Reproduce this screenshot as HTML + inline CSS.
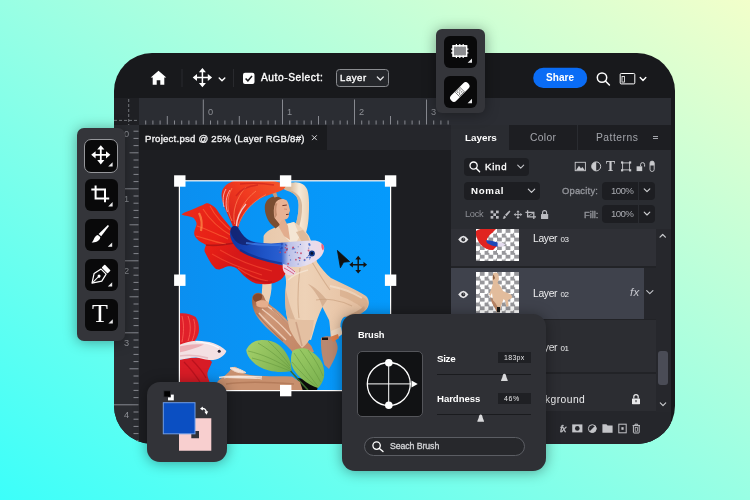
<!DOCTYPE html><html><head><meta charset="utf-8"><title>Editor</title><style>
*{box-sizing:border-box;margin:0;padding:0}
html,body{width:750px;height:500px;overflow:hidden}
body{position:relative;font-family:"Liberation Sans","DejaVu Sans",sans-serif;color:#fff;
 background:linear-gradient(to top right,#3cfffa 0%,#98ffe4 50%,#f2ffca 100%);}
.abs{position:absolute}
#win{position:absolute;left:114px;top:52.6px;width:560.5px;height:391.9px;border-radius:38px;background:#18191c;overflow:hidden}
#pg{position:absolute;left:-114px;top:-52.6px;width:750px;height:500px}
.t{position:absolute;white-space:nowrap;line-height:1;will-change:transform}
.float{position:absolute;background:#34353a;box-shadow:0 1px 14px rgba(0,0,0,.38)}
.btn{position:absolute;background:#09090a;border-radius:6px}
svg{position:absolute;left:0;top:0;overflow:visible}
</style></head><body>
<div id="win"><div id="pg">
<div class="abs" style="left:114px;top:98px;width:557px;height:27px;background:#2b2d33;"></div>
<div class="abs" style="left:114px;top:98px;width:25px;height:27px;background:#1f2024;"></div>
<div class="abs" style="left:114px;top:125px;width:25px;height:320px;background:#2b2d32;"></div>
<div class="abs" style="left:139px;top:125px;width:312px;height:25px;background:#25262b;"></div>
<div class="abs" style="left:139px;top:150px;width:312px;height:295px;background:#1d1e22;"></div>
<div class="abs" style="left:139px;top:125px;width:188px;height:25px;background:#1a1b1e;"></div>
<div class="abs" style="left:451px;top:125px;width:220px;height:320px;background:#2a2c31;"></div>
<svg width="750" height="500" viewBox="0 0 750 500"><rect x="145.20" y="120.5" width="1" height="4.0" fill="#878990"/><rect x="152.40" y="120.5" width="1" height="4.0" fill="#878990"/><rect x="159.60" y="120.5" width="1" height="4.0" fill="#878990"/><rect x="166.80" y="116" width="1" height="8.5" fill="#878990"/><rect x="174.00" y="120.5" width="1" height="4.0" fill="#878990"/><rect x="181.20" y="120.5" width="1" height="4.0" fill="#878990"/><rect x="188.40" y="120.5" width="1" height="4.0" fill="#878990"/><rect x="195.60" y="120.5" width="1" height="4.0" fill="#878990"/><rect x="202.80" y="99.5" width="1" height="25.0" fill="#878990"/><rect x="210.00" y="120.5" width="1" height="4.0" fill="#878990"/><rect x="217.20" y="120.5" width="1" height="4.0" fill="#878990"/><rect x="224.40" y="120.5" width="1" height="4.0" fill="#878990"/><rect x="231.60" y="120.5" width="1" height="4.0" fill="#878990"/><rect x="238.80" y="116" width="1" height="8.5" fill="#878990"/><rect x="246.00" y="120.5" width="1" height="4.0" fill="#878990"/><rect x="253.20" y="120.5" width="1" height="4.0" fill="#878990"/><rect x="260.40" y="120.5" width="1" height="4.0" fill="#878990"/><rect x="267.60" y="120.5" width="1" height="4.0" fill="#878990"/><rect x="274.80" y="120.5" width="1" height="4.0" fill="#878990"/><rect x="282.00" y="99.5" width="1" height="25.0" fill="#878990"/><rect x="289.20" y="120.5" width="1" height="4.0" fill="#878990"/><rect x="296.40" y="120.5" width="1" height="4.0" fill="#878990"/><rect x="303.60" y="120.5" width="1" height="4.0" fill="#878990"/><rect x="310.80" y="120.5" width="1" height="4.0" fill="#878990"/><rect x="318.00" y="116" width="1" height="8.5" fill="#878990"/><rect x="325.20" y="120.5" width="1" height="4.0" fill="#878990"/><rect x="332.40" y="120.5" width="1" height="4.0" fill="#878990"/><rect x="339.60" y="120.5" width="1" height="4.0" fill="#878990"/><rect x="346.80" y="120.5" width="1" height="4.0" fill="#878990"/><rect x="354.00" y="99.5" width="1" height="25.0" fill="#878990"/><rect x="361.20" y="120.5" width="1" height="4.0" fill="#878990"/><rect x="368.40" y="120.5" width="1" height="4.0" fill="#878990"/><rect x="375.60" y="120.5" width="1" height="4.0" fill="#878990"/><rect x="382.80" y="120.5" width="1" height="4.0" fill="#878990"/><rect x="390.00" y="116" width="1" height="8.5" fill="#878990"/><rect x="397.20" y="120.5" width="1" height="4.0" fill="#878990"/><rect x="404.40" y="120.5" width="1" height="4.0" fill="#878990"/><rect x="411.60" y="120.5" width="1" height="4.0" fill="#878990"/><rect x="418.80" y="120.5" width="1" height="4.0" fill="#878990"/><rect x="426.00" y="99.5" width="1" height="25.0" fill="#878990"/><rect x="433.20" y="120.5" width="1" height="4.0" fill="#878990"/><rect x="440.40" y="120.5" width="1" height="4.0" fill="#878990"/><rect x="447.60" y="120.5" width="1" height="4.0" fill="#878990"/><rect x="133.5" y="130.70" width="5.0" height="1" fill="#878990"/><rect x="133.5" y="137.90" width="5.0" height="1" fill="#878990"/><rect x="133.5" y="145.10" width="5.0" height="1" fill="#878990"/><rect x="129.5" y="152.30" width="9.0" height="1" fill="#878990"/><rect x="133.5" y="159.50" width="5.0" height="1" fill="#878990"/><rect x="133.5" y="166.70" width="5.0" height="1" fill="#878990"/><rect x="133.5" y="173.90" width="5.0" height="1" fill="#878990"/><rect x="133.5" y="181.10" width="5.0" height="1" fill="#878990"/><rect x="114" y="188.30" width="24.5" height="1" fill="#878990"/><rect x="133.5" y="195.50" width="5.0" height="1" fill="#878990"/><rect x="133.5" y="202.70" width="5.0" height="1" fill="#878990"/><rect x="133.5" y="209.90" width="5.0" height="1" fill="#878990"/><rect x="133.5" y="217.10" width="5.0" height="1" fill="#878990"/><rect x="129.5" y="224.30" width="9.0" height="1" fill="#878990"/><rect x="133.5" y="231.50" width="5.0" height="1" fill="#878990"/><rect x="133.5" y="238.70" width="5.0" height="1" fill="#878990"/><rect x="133.5" y="245.90" width="5.0" height="1" fill="#878990"/><rect x="133.5" y="253.10" width="5.0" height="1" fill="#878990"/><rect x="114" y="260.30" width="24.5" height="1" fill="#878990"/><rect x="133.5" y="267.50" width="5.0" height="1" fill="#878990"/><rect x="133.5" y="274.70" width="5.0" height="1" fill="#878990"/><rect x="133.5" y="281.90" width="5.0" height="1" fill="#878990"/><rect x="133.5" y="289.10" width="5.0" height="1" fill="#878990"/><rect x="129.5" y="296.30" width="9.0" height="1" fill="#878990"/><rect x="133.5" y="303.50" width="5.0" height="1" fill="#878990"/><rect x="133.5" y="310.70" width="5.0" height="1" fill="#878990"/><rect x="133.5" y="317.90" width="5.0" height="1" fill="#878990"/><rect x="133.5" y="325.10" width="5.0" height="1" fill="#878990"/><rect x="114" y="332.30" width="24.5" height="1" fill="#878990"/><rect x="133.5" y="339.50" width="5.0" height="1" fill="#878990"/><rect x="133.5" y="346.70" width="5.0" height="1" fill="#878990"/><rect x="133.5" y="353.90" width="5.0" height="1" fill="#878990"/><rect x="133.5" y="361.10" width="5.0" height="1" fill="#878990"/><rect x="129.5" y="368.30" width="9.0" height="1" fill="#878990"/><rect x="133.5" y="375.50" width="5.0" height="1" fill="#878990"/><rect x="133.5" y="382.70" width="5.0" height="1" fill="#878990"/><rect x="133.5" y="389.90" width="5.0" height="1" fill="#878990"/><rect x="133.5" y="397.10" width="5.0" height="1" fill="#878990"/><rect x="114" y="404.30" width="24.5" height="1" fill="#878990"/><rect x="133.5" y="411.50" width="5.0" height="1" fill="#878990"/><rect x="133.5" y="418.70" width="5.0" height="1" fill="#878990"/><rect x="133.5" y="425.90" width="5.0" height="1" fill="#878990"/><rect x="133.5" y="433.10" width="5.0" height="1" fill="#878990"/><rect x="129.5" y="440.30" width="9.0" height="1" fill="#878990"/><path d="M128.7 99V125M114 120.4H139" stroke="#878990" stroke-width="1" stroke-dasharray="3 2" fill="none" opacity=".8"/></svg>
<div class="t" style="left:207.50px;top:108.21px;font-size:9.2px;color:#8e9096;">0</div>
<div class="t" style="left:286.70px;top:108.21px;font-size:9.2px;color:#8e9096;">1</div>
<div class="t" style="left:358.60px;top:108.21px;font-size:9.2px;color:#8e9096;">2</div>
<div class="t" style="left:430.70px;top:108.21px;font-size:9.2px;color:#8e9096;">3</div>
<div class="t" style="left:124.20px;top:130.41px;font-size:9.2px;color:#8e9096;">0</div>
<div class="t" style="left:124.20px;top:195.21px;font-size:9.2px;color:#8e9096;">1</div>
<div class="t" style="left:124.20px;top:267.21px;font-size:9.2px;color:#8e9096;">2</div>
<div class="t" style="left:124.20px;top:339.21px;font-size:9.2px;color:#8e9096;">3</div>
<div class="t" style="left:124.20px;top:411.21px;font-size:9.2px;color:#8e9096;">4</div>
<svg width="750" height="500" viewBox="0 0 750 500"><path d="M158.5 70.8 L166.3 77.6 H164.3 V84.7 H160.3 V80.2 H156.7 V84.7 H152.7 V77.6 H150.7 Z" fill="#fff"/><rect x="181.5" y="69" width="1" height="18" fill="#292a2e"/><rect x="233" y="69" width="1" height="18" fill="#292a2e"/><path d="M196.14000000000001 77.6H208.66M202.4 71.33999999999999V83.86" stroke="#fff" stroke-width="1.5" fill="none"/><path d="M212.10 77.60L207.80 81.10L207.80 74.10ZM192.70 77.60L197.00 74.10L197.00 81.10ZM202.40 87.30L198.90 83.00L205.90 83.00ZM202.40 67.90L205.90 72.20L198.90 72.20Z" fill="#fff"/><path d="M219.2 77.89999999999999L222 80.7L224.8 77.89999999999999" stroke="#fff" stroke-width="1.4" fill="none" stroke-linecap="round" stroke-linejoin="round"/><rect x="243" y="72.7" width="11.5" height="11.3" rx="2" fill="#fff"/><path d="M245.6 78.4L247.9 80.8L252 76" stroke="#18191c" stroke-width="1.5" fill="none"/><rect x="336.5" y="69.5" width="52" height="17" rx="3" fill="#25272b" stroke="#8a8c90" stroke-width="1"/><path d="M377.3 77.0L380.3 80.0L383.3 77.0" stroke="#e6e6e8" stroke-width="1.2" fill="none" stroke-linecap="round" stroke-linejoin="round"/><rect x="533.2" y="67.8" width="54" height="20.2" rx="10.1" fill="#0a6cf5"/><circle cx="602" cy="77.6" r="4.7" stroke="#fff" stroke-width="1.5" fill="none"/><path d="M605.4 81L609.4 85" stroke="#fff" stroke-width="1.6" stroke-linecap="round"/><rect x="620.2" y="73.5" width="14.6" height="10.4" rx="1" stroke="#fff" stroke-width="1" fill="none"/><rect x="622" y="76.5" width="2.6" height="5.6" fill="none" stroke="#fff" stroke-width=".8"/><path d="M640.2 77.6L643 80.4L645.8 77.6" stroke="#fff" stroke-width="1.4" fill="none" stroke-linecap="round" stroke-linejoin="round"/></svg>
<div class="t" style="left:260.70px;top:72.87px;font-size:10.2px;color:#fff;-webkit-text-stroke:0.36px #fff;letter-spacing:0.567px;">Auto-Select:</div>
<div class="t" style="left:340.20px;top:72.87px;font-size:9.6px;color:#fff;-webkit-text-stroke:0.34px #fff;letter-spacing:0.546px;">Layer</div>
<div class="t" style="left:546.00px;top:73.23px;font-size:10px;color:#fff;font-weight:700;letter-spacing:0.052px;">Share</div>
<div class="t" style="left:145.30px;top:133.87px;font-size:9.6px;color:#f2f2f3;-webkit-text-stroke:0.34px #f2f2f3;letter-spacing:0.235px;">Project.psd @ 25% (Layer RGB/8#)</div>
<svg width="750" height="500" viewBox="0 0 750 500"><path d="M312 135.3L316.8 140.1M316.8 135.3L312 140.1" stroke="#d8d8da" stroke-width="1"/></svg>
<svg width="750" height="500" viewBox="0 0 750 500"><defs>
<clipPath id="ic"><rect x="179.4" y="180.8" width="211.2" height="209.8"/></clipPath>
<linearGradient id="gbg" x1="0" y1="0" x2="1" y2="0"><stop offset="0" stop-color="#0b8ff0"/><stop offset=".5" stop-color="#0796f8"/><stop offset="1" stop-color="#059afc"/></linearGradient>
<linearGradient id="gbody" gradientUnits="userSpaceOnUse" x1="235" y1="0" x2="324" y2="0"><stop offset="0" stop-color="#123aa8"/><stop offset=".35" stop-color="#1f55c8"/><stop offset=".52" stop-color="#2a5fd0"/><stop offset=".6" stop-color="#b9bfe8"/><stop offset=".8" stop-color="#e4def0"/><stop offset="1" stop-color="#f0d8e4"/></linearGradient>
<linearGradient id="gfin1" gradientUnits="userSpaceOnUse" x1="225" y1="225" x2="280" y2="182"><stop offset="0" stop-color="#d8201c"/><stop offset=".5" stop-color="#f03a20"/><stop offset="1" stop-color="#f4552a"/></linearGradient>
<linearGradient id="gfin2" gradientUnits="userSpaceOnUse" x1="185" y1="210" x2="240" y2="250"><stop offset="0" stop-color="#ea2a1a"/><stop offset=".6" stop-color="#e82016"/><stop offset="1" stop-color="#d61818"/></linearGradient>
<linearGradient id="gfin3" gradientUnits="userSpaceOnUse" x1="205" y1="250" x2="280" y2="285"><stop offset="0" stop-color="#e8241c"/><stop offset="1" stop-color="#d81a1c"/></linearGradient>
<linearGradient id="gcloth" gradientUnits="userSpaceOnUse" x1="262" y1="0" x2="370" y2="0"><stop offset="0" stop-color="#e8c8ab"/><stop offset=".4" stop-color="#eed2b7"/><stop offset="1" stop-color="#e4bc9c"/></linearGradient>
<linearGradient id="garm" gradientUnits="userSpaceOnUse" x1="290" y1="0" x2="310" y2="0"><stop offset="0" stop-color="#d8b898"/><stop offset=".45" stop-color="#f6ead8"/><stop offset="1" stop-color="#ead0b4"/></linearGradient>
<linearGradient id="gwood" gradientUnits="userSpaceOnUse" x1="255" y1="300" x2="300" y2="345"><stop offset="0" stop-color="#a86848"/><stop offset=".3" stop-color="#cf9878"/><stop offset="1" stop-color="#c48868"/></linearGradient>
<linearGradient id="gleaf" gradientUnits="userSpaceOnUse" x1="246" y1="345" x2="292" y2="372"><stop offset="0" stop-color="#a4d06a"/><stop offset="1" stop-color="#78ac4c"/></linearGradient>
<linearGradient id="gleaf2" gradientUnits="userSpaceOnUse" x1="293" y1="350" x2="322" y2="382"><stop offset="0" stop-color="#9ccc66"/><stop offset="1" stop-color="#7cb250"/></linearGradient>
</defs><g clip-path="url(#ic)"><rect x="179" y="180" width="212" height="211" fill="url(#gbg)"/><path d="M281.6 186.6C284 183.2 290 182.6 294 182.4C300 181.8 305.4 184.6 307.4 190C309.6 197 309.2 210 308.6 218C308 226 306.6 231 305 236L293 232C296.4 224 298.6 214 298.6 205C298.4 198 296 194.6 290.6 192C287 190.6 283 190 281.6 186.6Z" fill="url(#garm)"/><path d="M290.6 192C296 194.6 298.4 198 298.6 205C298.6 214 296.4 224 293 232L297 233.4C300.6 224 302.4 214 302 205C301.6 198 298 193.6 292 191Z" fill="#c9a484" opacity=".7"/><path d="M263.6 236C266 231 272 228.6 279 226L294 222C300 226 306 231 309 236C313 244 315 254 317 262C321 268 326 274 331 278C343 284 357 290 366 296C370 300 369.6 306 366 310C360 315 350 316 344 317C340 320 340 326 341 334L331 338.6C330 330 330 324 329 320L322.4 307C319 314 316 322 314 330L311 340L300 340C296 334 290 326 287.6 320C285 310 284.6 298 285.6 288C286.4 282 286 278 284.8 274L282 266L263.4 246Z" fill="url(#gcloth)"/><path d="M322.4 307C320 298 314 290 308 284C314 286 322 294 327 300Z" fill="#cfa586" opacity=".7"/><path d="M285.6 288C288 300 292 314 300 330L311 340L300 340C296 334 290 326 287.6 320C285 310 284.6 298 285.6 288Z" fill="#d6ae90" opacity=".8"/><path d="M344 317C350 314 358 312 364 306C366 309 364 312 361 314C356 316 350 316.6 344 317Z" fill="#c89c7c" opacity=".8"/><path d="M279 226L286 238L294 246L300 236L294 222Z" fill="#f4e6d4"/><path d="M340 288C350 291 360 295 366 299C369 303 368 307 365 310C360 306 352 300 340 296Z" fill="#d2a684" opacity=".55"/><path d="M296 232L303 244L309 258L312 250L308 236L303 230Z" fill="#d9b494" opacity=".8"/><path d="M300 268C298 284 297 300 299 318M312 262C318 272 324 282 330 290M316 300C326 298 340 300 352 306" stroke="#c79c7c" stroke-width="1.1" fill="none" opacity=".6"/><path d="M288 280C292 276 300 272 308 270" stroke="#f6e8d8" stroke-width="1.6" fill="none" opacity=".7"/><path d="M330 286C340 288 352 292 362 298" stroke="#f6e6d4" stroke-width="2" fill="none" opacity=".6"/><path d="M262.4 280L271.6 283C272 291 270 298 268.4 304L260 305.6C261.6 297 262.4 289 262.4 280Z" fill="#ecd0b4"/><path d="M276 222L284 218L288 226L290 240L284 236Z" fill="#e2ad8e"/><path d="M274 196.4C268.6 197 265 201.6 264.8 207C264.6 213 267 219 270.4 223.6L275.6 228.4L279.6 225L277 215L278 205L282 199C279.6 197 277 196 274 196.4Z" fill="#7a4e32"/><path d="M271.4 191.6L274.4 197.4L277.6 196.8L275.8 191Z" fill="#c49a7c"/><path d="M275.4 203C277.6 198.6 283.6 197.6 286.8 200.6C288.8 203.4 289 206.6 289.8 209.6C290.4 211 289.4 212 289 213C289.2 215 289 217 287.4 218.6C285.6 219.8 283.4 219.6 281.6 220.6L279.4 224L274.6 218C273.4 213 273.4 207.6 275.4 203Z" fill="#e8b294"/><path d="M275.4 203C274 208 274 213 275 218L277 215C276 211 276 207 277.4 203.4Z" fill="#b87e5e" opacity=".7"/><path d="M282.4 205.6L286.8 205M286 214.6L288.8 214.2" stroke="#6e3226" stroke-width="1"/><path d="M284 209L287 209.4" stroke="#d4907a" stroke-width="1.2"/><path d="M234 229C231 222 227.4 214 224.4 207C222 201 220.6 195 222.4 190C224.4 185.6 229 182.4 234 181L250 180.4H270C277 181.4 283.6 183 286 185.6C285 189 282 190.6 279 191.6C273 193.6 266 195.6 260 198.6C253 202.6 248 208 244 214C241 219 239 224 238 229Z" fill="url(#gfin1)"/><path d="M236 226C237 214 244 200 256 191M234.6 224C232 212 236 198 246 187M232 221C227 211 226 199 232 188M238 226C242 213 252 202 266 194.6" stroke="#ff8656" stroke-width="1" fill="none" opacity=".7"/><path d="M224 207C222.4 200 223 194 226 189M227.4 212C225 204 226 196 230 190" stroke="#ffd9d4" stroke-width=".9" fill="none" opacity=".8"/><path d="M236.4 227C236.6 219 240 211 246 204" stroke="#f6e0e6" stroke-width="1.3" fill="none" opacity=".85"/><path d="M240 184C250 183 262 183 274 185M236 196C240 190 248 186 258 185" stroke="#c4181a" stroke-width="1.4" fill="none" opacity=".55"/><path d="M181.4 214.6C185 212 188 211 191.8 209.8C196 208 199 206.4 203 205C205 203.6 207 203 208.6 203.6C211 204.4 213 206 215 207.4C217 209.4 218 211.4 219.4 213.4C221.4 216 223.4 218.6 225.4 221L232 229L240 240L262 256L284.6 266C286.6 268.6 286.6 272 285 274.6C283 278.6 279 281.6 274 283C268 284.6 262 284.4 256 283.4C251 281.6 247 278.6 243.6 275.4C241 272.6 239 270 236.4 268.2C233 266.6 230 266 227 266.6C224 267.6 222 269 219.6 269.4C217 269.6 215.4 269 214.4 267.6C212.6 265.6 211 263.4 209.6 261C208 258 206.4 254.6 204.6 251.4C204 249 205.4 247 206 245C203 243.4 199 241.4 196.6 238.6C194.6 236.6 194 234.4 194.2 232.2C194.6 229.6 196 227 196.6 224.2C196.6 221.6 195 219.6 193.4 217.8C189.6 216.4 185 216 181.4 214.6Z" fill="url(#gfin2)"/><path d="M197 226C204 228 214 233 228 239M203 209C208 217 218 228 232 236M196 236C204 238 214 242 226 244M210 206C214 214 222 224 234 233" stroke="#ff6a3a" stroke-width="1.1" fill="none" opacity=".6"/><path d="M199 213C201.6 218 202.4 224 201 231" stroke="#ff9a4e" stroke-width="2.2" fill="none" opacity=".65"/><path d="M212 254C222 260 240 268 262 275M220 250C230 256 248 265 272 271M238 268C246 274 256 279 268 281" stroke="#ff5a3a" stroke-width="1.1" fill="none" opacity=".5"/><path d="M246 275C253 280 262 282.6 272 282" stroke="#a81018" stroke-width="1.8" fill="none" opacity=".5"/><path d="M206 245C214 246 224 245 234 243" stroke="#8c0c16" stroke-width="1.6" fill="none" opacity=".55"/><path d="M231.6 227.4C233.4 225.6 236 225.4 237.6 227C240 231 243 236 247 239C251 241.4 256 242.4 262 243C270 243.8 278 243.4 284 242.6C294 241.6 304 241 313 240.6C318 240.4 322.8 243 324 246.8C324.8 250.8 322.6 255.6 319 258.6C314 262.6 308 265.6 301 266.8C296 267.4 290 267 284.6 265.8C279 264.6 274 263.4 269 262C262 260 256 258.6 251 256.6C246 254.4 241.6 252 238 249.2C234.6 246 232 242 230.6 238C229.6 234 230 230 231.6 227.4Z" fill="url(#gbody)"/><path d="M231.6 227.4C233.4 225.6 236 225.4 237.6 227C240 231 243 236 247 239C249 241 252 242 255 242.6C250 246 244 246 238 243C234 240 231 235 230.4 231C230.4 229.6 230.8 228.4 231.6 227.4Z" fill="#14226c" opacity=".8"/><path d="M246 243C256 244.6 268 245.6 281 244.8" stroke="#3f7ae4" stroke-width="1.8" fill="none" opacity=".8"/><path d="M240 250C250 256 266 261 282 263.6" stroke="#0c2682" stroke-width="2.4" fill="none" opacity=".6"/><circle cx="286.6" cy="245.7" r="0.79" fill="#c83050" opacity=".75"/><circle cx="281.9" cy="243.9" r="1.05" fill="#2448b0" opacity=".75"/><circle cx="304.6" cy="259.6" r="0.81" fill="#d04060" opacity=".75"/><circle cx="290.5" cy="259.9" r="0.66" fill="#2a55c0" opacity=".75"/><circle cx="309.2" cy="244.0" r="0.98" fill="#3a68d0" opacity=".75"/><circle cx="285.2" cy="250.0" r="0.55" fill="#3a68d0" opacity=".75"/><circle cx="298.4" cy="257.6" r="0.65" fill="#2448b0" opacity=".75"/><circle cx="286.9" cy="249.4" r="1.00" fill="#2448b0" opacity=".75"/><circle cx="279.2" cy="249.6" r="1.01" fill="#3a68d0" opacity=".75"/><circle cx="295.3" cy="252.2" r="0.67" fill="#2448b0" opacity=".75"/><circle cx="293.4" cy="248.4" r="0.99" fill="#3a68d0" opacity=".75"/><circle cx="280.4" cy="244.5" r="0.81" fill="#3a68d0" opacity=".75"/><circle cx="299.7" cy="258.2" r="1.10" fill="#d04060" opacity=".75"/><circle cx="285.3" cy="252.2" r="0.88" fill="#d04060" opacity=".75"/><circle cx="293.1" cy="247.4" r="0.95" fill="#c83050" opacity=".75"/><circle cx="289.3" cy="255.2" r="0.56" fill="#3a68d0" opacity=".75"/><circle cx="281.0" cy="248.3" r="0.87" fill="#2448b0" opacity=".75"/><circle cx="286.6" cy="250.5" r="0.67" fill="#d04060" opacity=".75"/><circle cx="279.8" cy="251.0" r="1.04" fill="#2a55c0" opacity=".75"/><circle cx="309.6" cy="258.9" r="0.51" fill="#3a68d0" opacity=".75"/><circle cx="288.2" cy="263.8" r="1.02" fill="#c83050" opacity=".75"/><circle cx="306.8" cy="257.8" r="0.68" fill="#2a55c0" opacity=".75"/><circle cx="285.1" cy="252.8" r="0.65" fill="#d04060" opacity=".75"/><circle cx="298.2" cy="246.8" r="0.51" fill="#2448b0" opacity=".75"/><circle cx="280.4" cy="247.1" r="1.10" fill="#3a68d0" opacity=".75"/><circle cx="297.3" cy="252.7" r="0.75" fill="#d04060" opacity=".75"/><circle cx="285.7" cy="244.7" r="0.94" fill="#2a55c0" opacity=".75"/><circle cx="298.1" cy="263.9" r="0.52" fill="#2448b0" opacity=".75"/><circle cx="294.7" cy="248.7" r="0.57" fill="#2a55c0" opacity=".75"/><circle cx="295.9" cy="259.7" r="0.89" fill="#c83050" opacity=".75"/><circle cx="285.4" cy="247.7" r="0.75" fill="#c83050" opacity=".75"/><circle cx="280.2" cy="252.3" r="0.89" fill="#d04060" opacity=".75"/><circle cx="292.7" cy="248.0" r="0.52" fill="#d04060" opacity=".75"/><circle cx="287.1" cy="248.6" r="0.96" fill="#d04060" opacity=".75"/><circle cx="292.3" cy="249.0" r="0.53" fill="#3a68d0" opacity=".75"/><circle cx="308.7" cy="255.4" r="0.74" fill="#2448b0" opacity=".75"/><circle cx="307.8" cy="257.2" r="0.80" fill="#2a55c0" opacity=".75"/><circle cx="282.0" cy="247.9" r="1.04" fill="#2448b0" opacity=".75"/><circle cx="308.6" cy="250.6" r="0.98" fill="#c83050" opacity=".75"/><circle cx="299.6" cy="260.6" r="0.63" fill="#2448b0" opacity=".75"/><circle cx="304.6" cy="260.3" r="1.05" fill="#3a68d0" opacity=".75"/><circle cx="309.6" cy="245.1" r="1.08" fill="#3a68d0" opacity=".75"/><circle cx="300.4" cy="244.4" r="0.58" fill="#2448b0" opacity=".75"/><circle cx="310.0" cy="257.5" r="1.02" fill="#2a55c0" opacity=".75"/><circle cx="301.0" cy="253.3" r="0.95" fill="#c83050" opacity=".75"/><circle cx="308.7" cy="248.1" r="0.63" fill="#2a55c0" opacity=".75"/><circle cx="311.9" cy="253.4" r="3" fill="#123a8c"/><circle cx="311.9" cy="253.4" r="1.4" fill="#05102c"/><path d="M321.6 243.4C324 244.6 324.6 248 323 250.6C321.6 249 321 246 321.6 243.4Z" fill="#e8607a"/><path d="M283 264C288 265 293 268 296 273C292 276.6 287 276 284 272C282.6 270 282.4 266.6 283 264Z" fill="#ecd4e4"/><path d="M284 268C288 270 291 272 294 274M287 266C290 268 293 270 295 272" stroke="#d04068" stroke-width=".8" fill="none"/><path d="M252.4 297C253.6 293 258.6 291.6 262 294C264.6 296 264.6 299.6 267 302.4C272 306 280 312 287 320C294 327 302 336 311.4 346L314 352L294 354C290 348 284 343 278 338C270 331 261 323 256 315C252.6 309 251.4 302 252.4 297Z" fill="url(#gwood)"/><path d="M252.8 297C254.4 293.4 258.6 292.4 261.6 294.6C263 297.4 261.2 301 257.8 302C255 302.2 252.8 300.4 252.8 297Z" fill="#86492c"/><path d="M262 309C270 315 280 323 291 336M267 306C277 312 288 322 299 336M259 313C266 321 276 330 286 340" stroke="#f2d6c2" stroke-width="1.4" fill="none" opacity=".85"/><path d="M256.6 313C263 322 273 331 283 341M272 309C281 316 291 326 302 339" stroke="#9a5c3e" stroke-width="1.2" fill="none" opacity=".55"/><path d="M256 302C259 300 264 299.6 268.6 302L268 307C264 308 260 307.6 256.6 306Z" fill="#e6ae8c"/><path d="M288 318C294 320 304 320 314 320L312 334C310 340 306 345 302 348C298 344 293 336 290 330C288.6 326 288 322 288 318Z" fill="#e4c0a2"/><path d="M296 322C298 330 300 338 302 346" stroke="#c4957a" stroke-width="1.6" fill="none" opacity=".7"/><path d="M321 338C324 336 329 336 332.6 337C336 340 338 345 337.6 349C336.6 355 333 362 329 369L324.6 365C322 358 320.6 348 321 338Z" fill="#b98870"/><path d="M331 331L341 327L342.4 334L336 339L331.6 338Z" fill="#efd6be"/><path d="M330 337L338 334L339 338L333 342Z" fill="#dd7e4c"/><path d="M322 337.4H328V340H322Z" fill="#1c1410"/><path d="M297 378C303 378 311 381 318 386L317 390.6H302C300 386 298 382 297 378Z" fill="#0c0c0a"/><path d="M246.2 350C249 344 254 340.6 260 340.2C267 339.6 274 341.4 279 345C285 350 289 357 291 364L291.6 371C284 372.6 276 372.4 269 370.6C262 368.6 256 365.6 252 361C248.6 357.6 246.6 354 246.2 350Z" fill="url(#gleaf)"/><path d="M248 351C262 354 278 361 291 370M258 343C268 349 280 358 290 368M252 358C264 361 278 366 290 371M268 341C276 348 284 357 290 366" stroke="#6a9c40" stroke-width=".8" fill="none" opacity=".8"/><path d="M292.6 351C296 348.4 301 347.6 305.6 348.6C311 350.6 316.6 355 320.4 360C323.6 364.6 324.8 371 324 377C323 381.6 320.6 385.6 318 388C312.6 386.6 307 383 302 379C297 375 293 369.6 291.4 364C290.6 359.6 291 354.6 292.6 351Z" fill="url(#gleaf2)"/><path d="M294 353C300 362 308 374 317.6 386M300 349.6C306 358 314 370 320.6 382M292 362C298 369 306 378 315.6 386M308 350C314 358 319.6 367 323 376" stroke="#6a9c40" stroke-width=".8" fill="none" opacity=".8"/><path d="M290.6 371C296 377 302 384 308 390" stroke="#3c6a2c" stroke-width="1.6" fill="none"/><path d="M218 381C222 377 228 374 231 369C232.6 366 236 366 238 368.6C240 371.6 244 374 250 375C262 376.6 276 376 292 376.4L300 382L303 391H212Z" fill="#c8906e"/><path d="M230 368C234 366.6 240 369 246 372.6C240 373.6 234 372 230 368Z M224 378C236 375 250 377 262 379" fill="#f4e2d6" stroke="#f0d6c6" stroke-width="1"/><path d="M226 384C246 381 270 382 294 384" stroke="#a8704e" stroke-width="1.4" fill="none" opacity=".6"/><path d="M219 377.6C228 375.6 240 376 262 377" stroke="#f6e8de" stroke-width="1.5" fill="none" opacity=".9"/><path d="M179 313.6C184 312.6 191 314 195.6 317C198.6 321 199.6 328 198.6 333C197.6 337 195.6 340 194 342L179 346Z" fill="#e0202a"/><path d="M182 316C184 324 184 332 182 342M188 316C191 324 191 332 188 341M193.6 319C196 326 195 334 192 341" stroke="#ff6a5a" stroke-width="1" fill="none" opacity=".7"/><path d="M179 360C188 358 196 357.4 203.6 357.6C207 358 210 359.6 212 362C210.6 366 208 370 207.4 373C207 376 208.6 379 209.6 382L179 382Z" fill="#d81c26"/><path d="M184 362C190 368 196 376 200 382M192 360C198 366 203 372 206 378" stroke="#a80c18" stroke-width="1.2" fill="none" opacity=".6"/><path d="M179 345C184 343 190 341 196 340.8C202 340.6 208 341.6 213 343C218 344.6 223 347.6 226.4 351C225.6 353.6 223 356 220.6 357.4C217 359.4 213 360.4 209 360C204 359.4 200 357.6 196 357.4C190 357.4 184 359 179 360Z" fill="#f3e0e3"/><path d="M179 346.6C186 344.6 194 343.6 204 344.6C197 348 188 350.6 179 352.6Z" fill="#e8a0a8" opacity=".8"/><path d="M179 356C188 354.6 198 355 208 358" stroke="#e4b4ba" stroke-width="1.6" fill="none" opacity=".8"/><path d="M196 341.6C204 342 212 344 219 348" stroke="#fff" stroke-width="1.4" fill="none" opacity=".8"/><circle cx="219.2" cy="351.2" r="1.5" fill="#2a2030"/></g><rect x="179.4" y="180.8" width="211.2" height="209.8" fill="none" stroke="#fff" stroke-width="1.2"/><rect x="174.1" y="175.3" width="11.4" height="11.4" fill="#fff"/><rect x="279.9" y="175.3" width="11.4" height="11.4" fill="#fff"/><rect x="384.9" y="175.3" width="11.4" height="11.4" fill="#fff"/><rect x="174.1" y="274.5" width="11.4" height="11.4" fill="#fff"/><rect x="384.9" y="274.5" width="11.4" height="11.4" fill="#fff"/><rect x="280.0" y="384.9" width="11.4" height="11.4" fill="#fff"/><rect x="174.1" y="384.9" width="11.4" height="11.4" fill="#fff"/><rect x="384.9" y="384.9" width="11.4" height="11.4" fill="#fff"/><path d="M337.4 250.4L349.6 261.6L343.6 262.2L340.4 267.8Z" fill="#111" stroke="#111" stroke-width=".8" stroke-linejoin="round"/><path d="M352.18 264.7H364.21999999999997M358.2 258.68V270.71999999999997" stroke="#151515" stroke-width="1.4" fill="none"/><path d="M367.10 264.70L363.50 267.60L363.50 261.80ZM349.30 264.70L352.90 261.80L352.90 267.60ZM358.20 273.60L355.30 270.00L361.10 270.00ZM358.20 255.80L361.10 259.40L355.30 259.40Z" fill="#151515"/></svg>
<div class="abs" style="left:509.3px;top:125px;width:161.7px;height:25.4px;background:#1d1e22;"></div>
<div class="abs" style="left:576.6px;top:125px;width:1px;height:25.4px;background:#2a2c31;"></div>
<div class="t" style="left:465.20px;top:132.92px;font-size:9.9px;color:#fff;font-weight:700;letter-spacing:-0.025px;">Layers</div>
<div class="t" style="left:529.70px;top:132.58px;font-size:10.3px;color:#a3a5ab;letter-spacing:0.346px;">Color</div>
<div class="t" style="left:596.40px;top:132.58px;font-size:10.3px;color:#a3a5ab;letter-spacing:0.492px;">Patterns</div>
<div class="abs" style="left:653px;top:135.8px;width:5.4px;height:1.2px;background:#a3a5ab;"></div>
<div class="abs" style="left:653px;top:138.3px;width:5.4px;height:1.2px;background:#a3a5ab;"></div>
<div class="abs" style="left:464.4px;top:157.8px;width:64.2px;height:18.3px;background:#1d1e22;border-radius:4px"></div>
<div class="abs" style="left:464.4px;top:181.6px;width:75.2px;height:18px;background:#1d1e22;border-radius:4px"></div>
<div class="abs" style="left:601.9px;top:181.6px;width:36.3px;height:18px;background:#1d1e22;border-radius:4px 0 0 4px"></div>
<div class="abs" style="left:639px;top:181.6px;width:16.1px;height:18px;background:#1d1e22;border-radius:0 4px 4px 0"></div>
<div class="abs" style="left:601.9px;top:204.8px;width:36.3px;height:18.2px;background:#1d1e22;border-radius:4px 0 0 4px"></div>
<div class="abs" style="left:639px;top:204.8px;width:16.1px;height:18.2px;background:#1d1e22;border-radius:0 4px 4px 0"></div>
<div class="t" style="left:484.60px;top:161.99px;font-size:9.7px;color:#fff;-webkit-text-stroke:0.34px #fff;letter-spacing:0.728px;">Kind</div>
<div class="t" style="left:471.00px;top:186.19px;font-size:9.7px;color:#fff;font-weight:700;letter-spacing:0.714px;">Nomal</div>
<div class="t" style="left:562.30px;top:186.44px;font-size:9.4px;color:#93959b;-webkit-text-stroke:0.33px #93959b;letter-spacing:0.217px;">Opacity:</div>
<div class="t" style="left:584.00px;top:209.64px;font-size:9.4px;color:#93959b;-webkit-text-stroke:0.33px #93959b;letter-spacing:-0.080px;">Fill:</div>
<div class="t" style="left:610.60px;top:185.99px;font-size:9.7px;color:#a9abb1;letter-spacing:-0.604px;">100%</div>
<div class="t" style="left:610.60px;top:209.19px;font-size:9.7px;color:#a9abb1;letter-spacing:-0.604px;">100%</div>
<div class="t" style="left:464.80px;top:210.03px;font-size:9.3px;color:#8e9096;letter-spacing:-0.315px;">Lock</div>
<svg width="750" height="500" viewBox="0 0 750 500"><circle cx="473.6" cy="165.6" r="3.6" stroke="#fff" stroke-width="1.3" fill="none"/><path d="M476.2 168.3L479.6 171.8" stroke="#fff" stroke-width="1.4" stroke-linecap="round"/><path d="M517.7 165.2L520.7 168.2L523.7 165.2" stroke="#c4c5c9" stroke-width="1.1" fill="none" stroke-linecap="round" stroke-linejoin="round"/><path d="M528.3 189.20000000000002L531.5 192.4L534.7 189.20000000000002" stroke="#cfd0d3" stroke-width="1.15" fill="none" stroke-linecap="round" stroke-linejoin="round"/><path d="M644.2 188.9L647 191.70000000000002L649.8 188.9" stroke="#cfd0d3" stroke-width="1.15" fill="none" stroke-linecap="round" stroke-linejoin="round"/><path d="M644.2 212.2L647 215.0L649.8 212.2" stroke="#cfd0d3" stroke-width="1.15" fill="none" stroke-linecap="round" stroke-linejoin="round"/><rect x="575.2" y="162.3" width="10.2" height="8.4" stroke="#c9cacd" stroke-width="0.9" fill="none"/><path d="M576 170.2L579 165.8L581 168.4L582.4 167L584.8 170.2Z" fill="#c9cacd"/><circle cx="596.2" cy="166.4" r="4.5" stroke="#c9cacd" stroke-width="1" fill="none"/><path d="M596.2 161.9A4.5 4.5 0 0 0 596.2 170.9Z" fill="#c9cacd"/><rect x="622.6" y="162.9" width="7" height="7" stroke="#c9cacd" stroke-width="0.9" fill="none"/><rect x="621" y="161.4" width="2.2" height="2.2" fill="#c9cacd"/><rect x="621" y="169.2" width="2.2" height="2.2" fill="#c9cacd"/><rect x="629" y="161.4" width="2.2" height="2.2" fill="#c9cacd"/><rect x="629" y="169.2" width="2.2" height="2.2" fill="#c9cacd"/><rect x="636.6" y="166.3" width="5.6" height="4.8" fill="#c9cacd"/><path d="M640.6 166.3V164.6A2 2 0 0 1 644.6 164.6V166.6" stroke="#c9cacd" stroke-width="1" fill="none"/><rect x="650" y="161.1" width="4.2" height="10.4" rx="2.1" stroke="#c9cacd" stroke-width="0.9" fill="none"/><path d="M650 165.5V163.2A2.1 2.1 0 0 1 654.2 163.2V165.5Z" fill="#c9cacd"/><rect x="490.6" y="210.6" width="2.7" height="2.7" fill="#b9babf"/><rect x="490.6" y="216.0" width="2.7" height="2.7" fill="#b9babf"/><rect x="493.3" y="213.3" width="2.7" height="2.7" fill="#b9babf"/><rect x="496.0" y="210.6" width="2.7" height="2.7" fill="#b9babf"/><rect x="496.0" y="216.0" width="2.7" height="2.7" fill="#b9babf"/><path d="M509.4 210.6L510.4 211.6L506.6 216.2L505 214.8Z" fill="#b9babf"/><path d="M504.4 215.4L506 217C505.6 218.4 504 219 502.6 218.8C503.6 218 503.2 216.2 504.4 215.4Z" fill="#b9babf"/><path d="M515.3000000000001 214.6H520.6999999999999M518 211.89999999999998V217.3" stroke="#b9babf" stroke-width="1" fill="none"/><path d="M522.30 214.60L520.30 216.30L520.30 212.90ZM513.70 214.60L515.70 212.90L515.70 216.30ZM518.00 218.90L516.30 216.90L519.70 216.90ZM518.00 210.30L519.70 212.30L516.30 212.30Z" fill="#b9babf"/><path d="M527.6 210.2V216.8H536M525.4 212.4H533.8V218.9" stroke="#b9babf" stroke-width="1.3" fill="none"/><path d="M527.8 216.6L533.6 212.6" stroke="#b9babf" stroke-width=".8"/><rect x="541" y="214" width="7.2" height="5" rx=".6" fill="#b9babf"/><path d="M542.6 214V212.6A2 2 0 0 1 546.6 212.6V214" stroke="#b9babf" stroke-width="1.1" fill="none"/></svg>
<div class="t" style="left:606.40px;top:160.04px;font-size:13.6px;color:#c9cacd;font-weight:700;font-family:'Liberation Serif',serif;">T</div>
<div class="abs" style="left:451px;top:229px;width:205px;height:37px;background:#2f3036;"></div>
<div class="abs" style="left:451px;top:266px;width:205px;height:2px;background:#222327;"></div>
<div class="abs" style="left:644px;top:268px;width:12px;height:50.5px;background:#26272c;"></div>
<div class="abs" style="left:451px;top:268px;width:193px;height:50.5px;background:#3f424c;"></div>
<div class="abs" style="left:451px;top:318.5px;width:205px;height:1.8px;background:#222327;"></div>
<div class="abs" style="left:451px;top:320.3px;width:205px;height:52px;background:#2c2d32;"></div>
<div class="abs" style="left:451px;top:372.3px;width:205px;height:1.5px;background:#222327;"></div>
<div class="abs" style="left:451px;top:373.8px;width:205px;height:37.6px;background:#2c2d32;"></div>
<div class="abs" style="left:451px;top:411.4px;width:220px;height:35px;background:#25262b;"></div>
<div class="abs" style="left:656px;top:229px;width:15px;height:183px;background:#26272c;"></div>
<div class="abs" style="left:658.2px;top:350.6px;width:9.8px;height:34.2px;background:#4a4c56;border-radius:3px"></div>
<div class="abs" style="left:476px;top:229px;width:43px;height:32px;background:repeating-conic-gradient(#97979b 0% 25%,#fff 0% 50%) 0 0/8.6px 8.6px;"></div>
<div class="abs" style="left:476px;top:271.7px;width:43px;height:41px;background:repeating-conic-gradient(#97979b 0% 25%,#fff 0% 50%) 0 0/8.6px 8.6px;"></div>
<svg width="750" height="500" viewBox="0 0 750 500"><defs><clipPath id="t1"><rect x="476" y="229" width="43" height="32"/></clipPath><clipPath id="t2"><rect x="476" y="271.7" width="43" height="41"/></clipPath></defs><g clip-path="url(#t1)"><path d="M476 231C480 228 488 228 496 229L492 233C489 235 487 238 486.6 241L497 246L493 250C488 250 484 248 481 245C478 242 477 238 476 235Z" fill="#e02420"/><path d="M486 240C490 240.4 495 241.4 499 243L498 246.4C494 246.6 490 245 487 243Z" fill="#1f48b8"/><path d="M497.6 242.6C500.6 242.4 503.6 243 505.4 244.4C503.6 246.4 500.6 247 497.6 246.6Z" fill="#e4dcee"/></g><g clip-path="url(#t2)"><path d="M493.4 273C495 272 497.4 272.4 498.4 274L499 279L497.6 283C500 285 502 288 503 291L510 294C512 295 512.6 297 511.4 298.6L508 300L508.6 306L506.4 307L505.4 301L503.6 299L501.4 305L499.6 312.4H496.6L496 305L493 300L492 293L490.4 296L489 294.6L491.6 288L493 283C492 280 492.4 276 493.4 273Z" fill="#e2bc9c"/><path d="M493.6 274.4C492.6 276 492.6 278.6 493.6 280L495 278Z" fill="#8a5c3c"/><path d="M490 296L496 304L499 310L496.4 311L492 303Z" fill="#b88464"/><path d="M497 307H500V312.4H497Z" fill="#1a1a18"/></g></svg>
<div class="t" style="left:532.7px;top:234.28px;font-size:10.3px;color:#ececee;letter-spacing:-0.316px">Layer<span style="letter-spacing:0.555px"> </span><span style="font-size:8px;letter-spacing:-0.600px">03</span></div>
<div class="t" style="left:532.7px;top:288.98px;font-size:10.3px;color:#ececee;letter-spacing:-0.316px">Layer<span style="letter-spacing:0.555px"> </span><span style="font-size:8px;letter-spacing:-0.600px">02</span></div>
<div class="t" style="left:532.7px;top:342.98px;font-size:10.3px;color:#ececee;letter-spacing:-0.316px">Layer<span style="letter-spacing:0.555px"> </span><span style="font-size:8px;letter-spacing:-0.600px">01</span></div>
<div class="t" style="left:526.00px;top:394.88px;font-size:10.3px;color:#ececee;letter-spacing:0.426px;">Background</div>
<div class="t" style="left:630.20px;top:287.07px;font-size:11.5px;color:#c6c7ce;font-style:italic;letter-spacing:0.255px;">fx</div>
<svg width="750" height="500" viewBox="0 0 750 500"><path d="M458.2 239.4Q463.3 232.1 468.40000000000003 239.4Q463.3 246.70000000000002 458.2 239.4Z" fill="#e6e6e8"/><circle cx="463.3" cy="239.4" r="2" fill="#2b2c31"/><circle cx="463.8" cy="238.8" r="0.6" fill="#c8c8cc"/><path d="M458.2 294.5Q463.3 287.2 468.40000000000003 294.5Q463.3 301.8 458.2 294.5Z" fill="#e6e6e8"/><circle cx="463.3" cy="294.5" r="2" fill="#2b2c31"/><circle cx="463.8" cy="293.9" r="0.6" fill="#c8c8cc"/><path d="M646.6999999999999 290.6L649.8 293.6L652.9 290.6" stroke="#bfc0c5" stroke-width="1.2" fill="none" stroke-linecap="round" stroke-linejoin="round"/><path d="M660 237.2L662.7 234.5L665.4 237.2" stroke="#c9cacd" stroke-width="1.2" fill="none" stroke-linecap="round" stroke-linejoin="round"/><path d="M660.3 402.84999999999997L663 405.55L665.7 402.84999999999997" stroke="#c9cacd" stroke-width="1.2" fill="none" stroke-linecap="round" stroke-linejoin="round"/><rect x="632" y="398.4" width="8" height="5.8" rx=".6" fill="#e8e8ea"/><path d="M633.8 398.4V396.8A2.2 2.2 0 0 1 638.2 396.8V398.4" stroke="#e8e8ea" stroke-width="1.2" fill="none"/><rect x="635.5" y="400" width="1" height="2.2" fill="#2c2d32"/><rect x="572.2" y="424.4" width="10.2" height="8" fill="#c3c4c8"/><circle cx="577.3" cy="428.4" r="2.3" fill="#25262b"/><circle cx="592.3" cy="428.6" r="3.9" stroke="#c3c4c8" stroke-width="1" fill="none"/><path d="M589.5 431.4A3.9 3.9 0 0 0 595.1 425.8Z" fill="#c3c4c8"/><path d="M602.4 424.2H606.4L607.6 425.6H612.6V432.8H602.4Z" fill="#c3c4c8"/><rect x="618.8" y="424.2" width="7.4" height="8.6" stroke="#c3c4c8" stroke-width="1" fill="none"/><rect x="621.4" y="427.2" width="2.2" height="2.6" fill="#c3c4c8"/><path d="M633.4 426V432.4Q633.4 433 634 433H638.6Q639.2 433 639.2 432.4V426M632.6 425.6H640M635 425.4V424.2H637.6V425.4" stroke="#c3c4c8" stroke-width="1" fill="none"/><rect x="635.2" y="427.6" width="2.2" height="3.6" stroke="#c3c4c8" stroke-width=".7" fill="none"/></svg>
<div class="t" style="left:559.80px;top:423.87px;font-size:9.6px;color:#c3c4c8;-webkit-text-stroke:0.34px #c3c4c8;font-style:italic;letter-spacing:-1.067px;">fx</div>
</div></div>
<div class="float" style="left:76.6px;top:128.2px;width:48.4px;height:213px;border-radius:7px"></div>
<div class="btn" style="left:84.2px;top:138.8px;width:34.2px;height:34.4px;border:1px solid #96979b;border-radius:7px"></div>
<div class="btn" style="left:85px;top:179px;width:33px;height:32.4px"></div>
<div class="btn" style="left:85px;top:219px;width:33px;height:32.4px"></div>
<div class="btn" style="left:85px;top:259px;width:33px;height:32.4px"></div>
<div class="btn" style="left:85px;top:298.8px;width:33px;height:32.4px"></div>
<svg width="750" height="500" viewBox="0 0 750 500"><path d="M94.72 154.8H106.88M100.8 148.72000000000003V160.88" stroke="#fff" stroke-width="1.8" fill="none"/><path d="M110.40 154.80L106.00 158.40L106.00 151.20ZM91.20 154.80L95.60 151.20L95.60 158.40ZM100.80 164.40L97.20 160.00L104.40 160.00ZM100.80 145.20L104.40 149.60L97.20 149.60Z" fill="#fff"/><path d="M112.6 166.6L108.19999999999999 166.6L112.6 162.2Z" fill="#e9e9ea"/><path d="M112.6 206.4L108.19999999999999 206.4L112.6 202.0Z" fill="#e9e9ea"/><path d="M112.2 246.8L107.8 246.8L112.2 242.4Z" fill="#e9e9ea"/><path d="M112.2 286.6L107.8 286.6L112.2 282.20000000000005Z" fill="#e9e9ea"/><path d="M112.8 323.6L108.39999999999999 323.6L112.8 319.20000000000005Z" fill="#e9e9ea"/><path d="M95.6 185.4V198.4H109.2M91.3 189.6H105V202.3" stroke="#fff" stroke-width="2" fill="none"/><path d="M107.9 225L109 226L101.2 236.2L98.6 234Z" fill="#fff"/><path d="M97.9 234.9L100.3 237.1C100.1 240.6 96.6 243 91.6 242.4C94.2 240.6 93.6 236.2 97.9 234.9Z" fill="#fff"/><g transform="translate(100.2 275) rotate(45)"><rect x="-4.2" y="-10.6" width="8.4" height="4.4" rx=".8" fill="#fff"/><path d="M-3.6 -4.8H3.6L5.4 3.2L0 11.6L-5.4 3.2Z" fill="none" stroke="#fff" stroke-width="1.2" stroke-linejoin="round"/><path d="M0 11V2.4" stroke="#fff" stroke-width="1"/><circle cx="0" cy="1.6" r="1.5" fill="#fff"/></g></svg>
<div class="t" style="left:91.70px;top:301.29px;font-size:26px;color:#fff;font-family:'Liberation Serif',serif;">T</div>
<div class="float" style="left:436px;top:28.8px;width:49px;height:84.7px;border-radius:6px"></div>
<div class="btn" style="left:444px;top:35.8px;width:33px;height:32.2px"></div>
<div class="btn" style="left:444px;top:75.8px;width:33px;height:32.4px"></div>
<svg width="750" height="500" viewBox="0 0 750 500"><rect x="454" y="46.8" width="11.6" height="8.4" fill="#8a8b8e"/><rect x="453.1" y="45.9" width="13.4" height="10.2" fill="none" stroke="#fff" stroke-width="1.7"/><path d="M456.4 43.9V46.4M459.8 43.9V46.4M463.2 43.9V46.4M456.4 55.6V58.1M459.8 55.6V58.1M463.2 55.6V58.1M451.2 49.2H453.6M451.2 52.8H453.6M466 49.2H468.4M466 52.8H468.4" stroke="#fff" stroke-width="1.2"/><path d="M472 62.8L467.6 62.8L472 58.4Z" fill="#e9e9ea"/><path d="M472 103.2L467.6 103.2L472 98.8Z" fill="#e9e9ea"/><g transform="translate(459.8 92) rotate(-45)"><rect x="-12" y="-3.7" width="24" height="7.4" rx="3.4" fill="#fff"/><rect x="-3.4" y="-3" width="6.8" height="6" fill="#fff" stroke="#333" stroke-width=".6"/><g fill="#333"><circle cx="-1.5" cy="-1.3" r=".6"/><circle cx="1.5" cy="-1.3" r=".6"/><circle cx="-1.5" cy="1.3" r=".6"/><circle cx="1.5" cy="1.3" r=".6"/><circle cx="0" cy="0" r=".5"/></g></g></svg>
<div class="float" style="left:146.7px;top:381.7px;width:80.8px;height:80.8px;border-radius:13px;background:#323338"></div>
<svg width="750" height="500" viewBox="0 0 750 500"><path d="M179 418.3H211.3V450.7H179Z M191.3 431V438.3H199V431Z" fill="#f8cfcf" fill-rule="evenodd"/><rect x="163.3" y="402.7" width="31.7" height="31.1" fill="#0b4fc2" stroke="#6f9de6" stroke-width="1"/><rect x="168" y="394.6" width="5.8" height="5.8" fill="#fff"/><rect x="163.8" y="390.8" width="6.6" height="6.2" fill="#000" stroke="#2e2f34" stroke-width=".8"/><path d="M201.2 408.6Q205.6 407.6 206.4 412.4" stroke="#fff" stroke-width="1.4" fill="none"/><path d="M200 408.8L202.8 406.6L203 410.4Z M204.4 411.8L208.2 411.2L206.6 414.8Z" fill="#fff"/></svg>
<div class="float" style="left:342px;top:314.4px;width:204px;height:156.2px;border-radius:13px;background:#2f3035"></div>
<div class="abs" style="left:356.8px;top:351.2px;width:66.4px;height:66px;background:#111214;border-radius:5px;border:1px solid #54555a"></div>
<div class="abs" style="left:498px;top:351.7px;width:32.8px;height:11.2px;background:#1f2024;"></div>
<div class="abs" style="left:498px;top:392.5px;width:32.8px;height:11.4px;background:#1f2024;"></div>
<div class="abs" style="left:436.7px;top:373.5px;width:94.1px;height:1.4px;background:#1a1b1e;"></div>
<div class="abs" style="left:436.7px;top:414px;width:94.1px;height:1.4px;background:#1a1b1e;"></div>
<div class="abs" style="left:363.9px;top:436.5px;width:160.8px;height:19.5px;border-radius:9.75px;border:1px solid #5b5d63;background:#27282c"></div>
<div class="t" style="left:357.90px;top:331.03px;font-size:9.3px;color:#fff;font-weight:700;letter-spacing:-0.117px;">Brush</div>
<div class="t" style="left:436.70px;top:353.50px;font-size:9.8px;color:#fff;font-weight:700;letter-spacing:-0.336px;">Size</div>
<div class="t" style="left:436.70px;top:393.67px;font-size:9.6px;color:#fff;font-weight:700;letter-spacing:-0.050px;">Hardness</div>
<div class="t" style="left:504.40px;top:354.27px;font-size:7px;color:#e6e6e8;letter-spacing:0.306px;">183px</div>
<div class="t" style="left:503.90px;top:394.97px;font-size:7px;color:#e6e6e8;letter-spacing:0.595px;">46%</div>
<div class="t" style="left:390.00px;top:442.35px;font-size:8.8px;color:#d3d4d7;-webkit-text-stroke:0.31px #d3d4d7;letter-spacing:-0.109px;">Seach Brush</div>
<svg width="750" height="500" viewBox="0 0 750 500"><circle cx="388.8" cy="384" r="21.5" stroke="#fff" stroke-width="1.3" fill="none"/><path d="M367.3 383.9H411M388.7 362.5V405.3" stroke="#fff" stroke-width="1"/><circle cx="388.8" cy="362.7" r="3.8" fill="#fff"/><circle cx="388.8" cy="405.3" r="3.8" fill="#fff"/><path d="M411.5 380.4L417.7 384L411.5 387.6Z" fill="#fff"/><path d="M504.4 373.8C505.59999999999997 373.8 506.0 375.0 506.4 377.0C507.0 378.8 507.79999999999995 380.0 507.79999999999995 381.0H501.0C501.0 380.0 501.79999999999995 378.8 502.4 377.0C502.79999999999995 375.0 503.2 373.8 504.4 373.8Z" fill="#d9d9db"/><path d="M480.7 414.6C481.9 414.6 482.3 415.8 482.7 417.8C483.3 419.6 484.09999999999997 420.8 484.09999999999997 421.8H477.3C477.3 420.8 478.09999999999997 419.6 478.7 417.8C479.09999999999997 415.8 479.5 414.6 480.7 414.6Z" fill="#d9d9db"/><circle cx="376.6" cy="445.6" r="3.7" stroke="#fff" stroke-width="1.3" fill="none"/><path d="M379.4 448.4L383 451.6" stroke="#fff" stroke-width="1.4" stroke-linecap="round"/></svg>
</body></html>
